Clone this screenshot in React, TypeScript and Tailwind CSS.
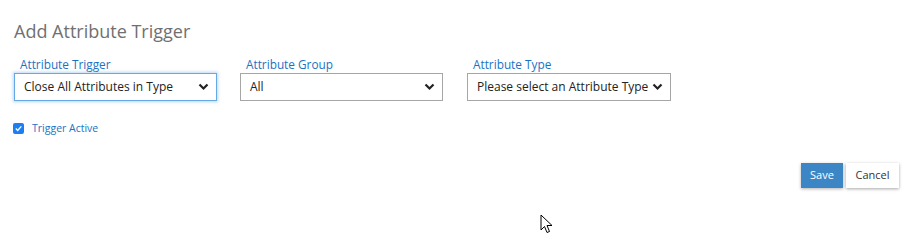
import React from "react";

function Chevron() {
  return (
    <svg width="11" height="8" viewBox="0 0 11 8" className="shrink-0">
      <path d="M1.5 1.5 L5.5 5.5 L9.5 1.5" fill="none" stroke="#222" strokeWidth="2.2" />
    </svg>
  );
}

function Field({ label, value, focused, w }: { label: string; value: string; focused?: boolean; w: string }) {
  return (
    <div className={`flex flex-col ${w}`}>
      <div className="pl-[6px] text-[11.8px] leading-[14px] mb-[2px] text-[#1a72c4]">{label}</div>
      <div
        className={`h-[28px] flex items-center justify-between pl-[9px] pr-[7px] bg-white border ${
          focused ? "border-[#66a9e6] shadow-[0_0_3px_1px_rgba(102,169,230,0.45)]" : "border-[#a6a6a6]"
        }`}
      >
        <span className="text-[12px] text-[#222] whitespace-nowrap">{value}</span>
        <Chevron />
      </div>
    </div>
  );
}

export default function App() {
  return (
    <div className="relative w-[913px] h-[248px] bg-white" style={{ fontFamily: '"Open Sans", sans-serif' }}>
      <div className="pt-[19px] pl-[14px]">
        <h1 className="text-[18px] leading-[24px] text-[#707070] font-normal">Add Attribute Trigger</h1>
        <div className="mt-[14px] flex">
          <Field label="Attribute Trigger" value="Close All Attributes in Type" focused w="w-[203px]" />
          <div className="w-[23px]" />
          <Field label="Attribute Group" value="All" w="w-[203px]" />
          <div className="w-[24px]" />
          <Field label="Attribute Type" value="Please select an Attribute Type" w="w-[204px]" />
        </div>
        <div className="mt-[22px] h-[11px] flex items-center">
          <span className="w-[11px] h-[11px] bg-[#1a7ff0] rounded-[2px] flex items-center justify-center -ml-[1px]">
            <svg width="9" height="9" viewBox="0 0 9 9">
              <path d="M1.8 4.6 L3.7 6.4 L7.3 2.4" fill="none" stroke="#fff" strokeWidth="1.4" />
            </svg>
          </span>
          <span className="ml-[8px] text-[10.5px] leading-[11px] text-[#1a72c4]">Trigger Active</span>
        </div>
        <div className="mt-[29px] flex justify-end pr-[14px] gap-[3px]">
          <button className="w-[42px] h-[25px] bg-[#3d86c6] text-white text-[11px] shadow-[0_1px_3px_rgba(0,0,0,0.3)]">Save</button>
          <button className="w-[53px] h-[25px] bg-white text-[#333] text-[11px] shadow-[0_1px_3px_rgba(0,0,0,0.35)]">Cancel</button>
        </div>
      </div>
      <svg className="absolute left-[540px] top-[214px]" width="14" height="22" viewBox="0 0 14 22">
        <path d="M1 1 L1 16 L4.5 12.5 L7 18.5 L9.5 17.5 L7 11.5 L12 11.5 Z" fill="#fff" stroke="#000" strokeWidth="1" strokeLinejoin="round" />
      </svg>
    </div>
  );
}
